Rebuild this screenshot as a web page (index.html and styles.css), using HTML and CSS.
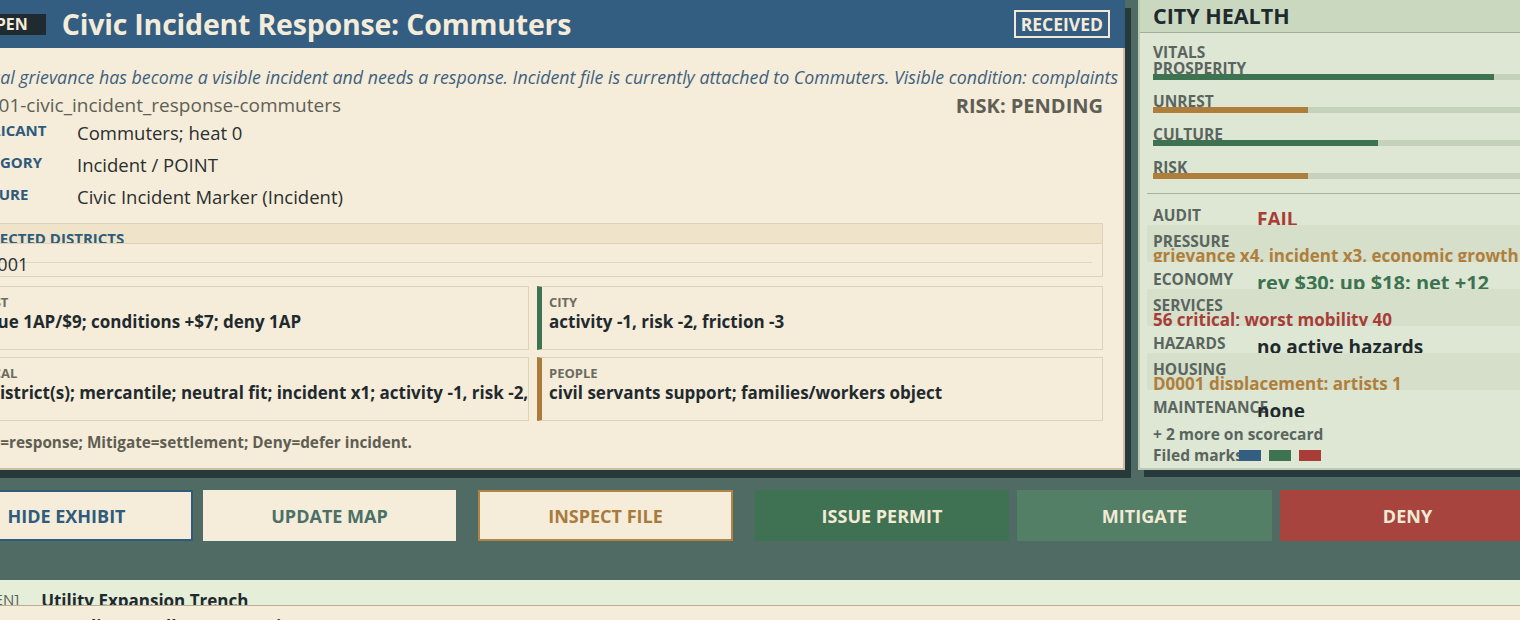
FILE: index.html
```html
<!DOCTYPE html>
<html lang="en">
<head>
  <meta charset="UTF-8">
  <meta name="viewport" content="width=device-width, initial-scale=1.0">
  <title>Civic Incident Response</title>
  <link rel="stylesheet" href="styles.css">
</head>
<body>
<div class="desk">

  <div class="upper">
    <!-- incident file -->
    <section class="dossier">
      <header class="dossier-head">
        <span class="state">OPEN</span>
        <h1>Civic Incident Response: Commuters</h1>
        <span class="stamp">RECEIVED</span>
      </header>
      <div class="dossier-body">
        <p class="summary">A local grievance has become a visible incident and needs a response. Incident file is currently attached to Commuters. Visible condition: complaints up along the transit corridor.</p>
        <div class="ref-row">
          <span class="ref">D0001-civic_incident_response-commuters</span>
          <span class="risk">RISK: PENDING</span>
        </div>
        <dl class="facts">
          <dt>APPLICANT</dt><dd>Commuters; heat 0</dd>
          <dt>CATEGORY</dt><dd>Incident / POINT</dd>
          <dt>FEATURE</dt><dd>Civic Incident Marker (Incident)</dd>
        </dl>
        <div class="districts">
          <div class="districts-head">AFFECTED DISTRICTS</div>
          <div class="districts-body">D0001</div>
        </div>
        <div class="effects">
          <div class="effect tone-blue">
            <span class="effect-label">COST</span>
            <span class="effect-value">Issue 1AP/$9; conditions +$7; deny 1AP</span>
          </div>
          <div class="effect tone-green">
            <span class="effect-label">CITY</span>
            <span class="effect-value">activity -1, risk -2, friction -3</span>
          </div>
          <div class="effect tone-blue">
            <span class="effect-label">LOCAL</span>
            <span class="effect-value">1 district(s); mercantile; neutral fit; incident x1; activity -1, risk -2, friction -3</span>
          </div>
          <div class="effect tone-gold">
            <span class="effect-label">PEOPLE</span>
            <span class="effect-value">civil servants support; families/workers object</span>
          </div>
        </div>
        <p class="note">Issue=response; Mitigate=settlement; Deny=defer incident.</p>
      </div>
    </section>

    <!-- city health sidebar -->
    <aside class="health">
      <h2>CITY HEALTH</h2>
      <div class="health-body">
        <div class="section-title">VITALS</div>
        <div class="meter">
          <div class="meter-label">PROSPERITY</div>
          <div class="meter-track"><div class="meter-fill good" style="width: 88%"></div></div>
        </div>
        <div class="meter">
          <div class="meter-label">UNREST</div>
          <div class="meter-track"><div class="meter-fill warn" style="width: 40%"></div></div>
        </div>
        <div class="meter">
          <div class="meter-label">CULTURE</div>
          <div class="meter-track"><div class="meter-fill good" style="width: 58%"></div></div>
        </div>
        <div class="meter">
          <div class="meter-label">RISK</div>
          <div class="meter-track"><div class="meter-fill warn" style="width: 40%"></div></div>
        </div>

        <div class="scorecard">
          <div class="score">
            <span class="score-label">AUDIT</span>
            <span class="score-value bad">FAIL</span>
          </div>
          <div class="score stacked">
            <span class="score-label">PRESSURE</span>
            <span class="score-value warn">grievance x4, incident x3, economic growth x2</span>
          </div>
          <div class="score">
            <span class="score-label">ECONOMY</span>
            <span class="score-value good wide">rev $30: up $18: net +12</span>
          </div>
          <div class="score stacked">
            <span class="score-label">SERVICES</span>
            <span class="score-value bad">56 critical; worst mobility 40</span>
          </div>
          <div class="score">
            <span class="score-label">HAZARDS</span>
            <span class="score-value">no active hazards</span>
          </div>
          <div class="score stacked">
            <span class="score-label">HOUSING</span>
            <span class="score-value warn">D0001 displacement: artists 1</span>
          </div>
          <div class="score">
            <span class="score-label">MAINTENANCE</span>
            <span class="score-value">none</span>
          </div>
        </div>

        <div class="more">+ 2 more on scorecard</div>
        <div class="marks">
          <span class="marks-label">Filed marks</span>
          <span class="mark blue"></span>
          <span class="mark green"></span>
          <span class="mark red"></span>
        </div>
      </div>
    </aside>
  </div>

  <div class="actions">
    <div class="action-group">
      <button class="btn btn-hide">HIDE EXHIBIT</button>
      <button class="btn btn-map">UPDATE MAP</button>
    </div>
    <button class="btn btn-inspect">INSPECT FILE</button>
    <div class="action-group">
      <button class="btn btn-issue">ISSUE PERMIT</button>
      <button class="btn btn-mitigate">MITIGATE</button>
      <button class="btn btn-deny">DENY</button>
    </div>
  </div>

  <ul class="docket">
    <li class="docket-row current">
      <span class="docket-state">[OPEN]</span>
      <span class="docket-title">Utility Expansion Trench</span>
    </li>
    <li class="docket-row">
      <span class="docket-state">[HOLD]</span>
      <span class="docket-title">Compliance Follow-Up Hearing</span>
      <span class="docket-turn">T20</span>
    </li>
  </ul>

</div>
</body>
</html>
```

FILE: styles.css
```css
html, body {
  margin: 0;
  height: 100%;
}

body {
  background: #4f6b64;
  font-family: "Open Sans", "Noto Sans", sans-serif;
  color: #1f2a2e;
  overflow: hidden;
}

.desk {
  margin-left: -58px;
  width: 1640px;
}

.upper {
  display: flex;
  align-items: flex-start;
}

/* ---------- incident file ---------- */

.dossier {
  width: 1183px;
  height: 470px;
  flex: none;
  display: flex;
  flex-direction: column;
  box-shadow: 6px 8px 0 #263a3b;
}

.dossier-head {
  height: 48px;
  flex: none;
  background: #335e82;
  display: flex;
  align-items: center;
  padding: 0 15px 0 31px;
  color: #f4ecd9;
}

.state {
  background: #1f2b31;
  font-size: 16px;
  font-weight: 700;
  line-height: 21px;
  padding: 0 18px 0 10px;
}

.dossier-head h1 {
  margin: 0 0 0 16px;
  font-size: 28.5px;
  font-weight: 700;
  letter-spacing: -0.2px;
}

.stamp {
  margin-left: auto;
  border: 2px solid #f1e8d5;
  font-size: 17.5px;
  font-weight: 700;
  line-height: 24px;
  padding: 0 5px;
}

.dossier-body {
  flex: 1;
  background: #f5ecda;
  border: 2px solid #cbbfa3;
  border-top: 0;
  padding: 18px 20px 0 19px;
  overflow: hidden;
}

.summary {
  margin: 0;
  font-size: 17.8px;
  font-style: italic;
  line-height: 22px;
  color: #3e617e;
  white-space: nowrap;
}

.ref-row {
  margin-top: 6px;
  display: flex;
  justify-content: space-between;
  align-items: center;
  height: 22px;
}

.ref {
  font-size: 19px;
  color: #5f5f55;
}

.risk {
  font-size: 20px;
  font-weight: 700;
  color: #5e5e55;
}

.facts {
  margin: 1px 0 0;
  display: grid;
  grid-template-columns: 114px 1fr;
  grid-auto-rows: 32px;
}

.facts dt {
  font-size: 15px;
  font-weight: 700;
  color: #2e5a7c;
  line-height: 18px;
  padding-top: 4px;
}

.facts dd {
  margin: 0;
  font-size: 18.5px;
  line-height: 32px;
  color: #2a2f30;
}

.districts {
  margin-top: 10px;
  border: 1px solid #ddd3bb;
}

.districts-head {
  height: 20px;
  overflow: hidden;
  background: #efe4ca;
  border-bottom: 1px solid #ddd3bb;
  padding: 4px 9px 0;
  box-sizing: border-box;
  font-size: 15px;
  font-weight: 700;
  line-height: 20px;
  color: #2e5a7c;
}

.districts-body {
  height: 32px;
  box-sizing: border-box;
  padding: 10px 10px 0;
  font-size: 18px;
  line-height: 20px;
  color: #2a2f30;
  background: linear-gradient(#e0d6bd, #e0d6bd) no-repeat;
  background-origin: content-box;
  background-clip: content-box;
  background-size: 100% 1px;
  background-position: 0 8px;
}

.effects {
  margin-top: 9px;
  display: grid;
  grid-template-columns: 1fr 1fr;
  grid-auto-rows: 64px;
  gap: 7px 8px;
}

.effect {
  border: 1px solid #ddd3bb;
  border-left: 5px solid #335e82;
  padding: 7px 8px 0 7px;
  display: flex;
  flex-direction: column;
  overflow: hidden;
  white-space: nowrap;
}

.tone-green { border-left-color: #3d7352; }
.tone-gold { border-left-color: #a97c3c; }

.effect-label {
  font-size: 13px;
  font-weight: 700;
  line-height: 17px;
  color: #6b6b5e;
}

.effect-value {
  font-size: 17px;
  font-weight: 700;
  line-height: 21px;
  color: #1f2a2e;
}

.note {
  margin: 11px 0 0 -2px;
  font-size: 15.3px;
  font-weight: 700;
  line-height: 20px;
  color: #5e5e52;
}

/* ---------- city health ---------- */

.health {
  margin: -2px 0 0 13px;
  width: 418px;
  height: 472px;
  flex: none;
  box-sizing: border-box;
  background: #dde7d3;
  border: 2px solid #bccab3;
  box-shadow: 6px 7px 0 #263a3b;
}

.health h2 {
  margin: 0;
  height: 32px;
  background: #cbd8c0;
  border-bottom: 1px solid #9fae98;
  padding-left: 13px;
  font-size: 21.5px;
  font-weight: 700;
  line-height: 31px;
  color: #1f2a2e;
}

.health-body {
  padding: 10px 13px 0;
}

.section-title,
.meter-label,
.score-label,
.more,
.marks-label {
  font-size: 15.5px;
  font-weight: 700;
  color: #5a655f;
}

.section-title {
  line-height: 18px;
}

.meter {
  margin-top: 1px;
}

.meter + .meter {
  margin-top: 15px;
}

.meter-label {
  height: 12px;
  line-height: 13px;
  overflow: hidden;
}

.meter-track {
  height: 6px;
  background: #c6d1bc;
}

.meter-fill {
  height: 100%;
}

.meter-fill.good { background: #3e7352; }
.meter-fill.warn { background: #b07e3b; }

.scorecard {
  margin: 14px -6px 0;
  padding-top: 4px;
  border-top: 1px solid #a5b49d;
}

.score {
  height: 27px;
  padding: 8px 6px 0;
  box-sizing: border-box;
  display: flex;
  align-items: flex-start;
  overflow: hidden;
  white-space: nowrap;
}

.score-label {
  width: 104px;
  flex: none;
  line-height: 18px;
}

.score-value {
  margin-top: 1px;
  font-size: 19px;
  font-weight: 700;
  line-height: 24px;
  color: #1f2a2e;
}

.score-value.wide {
  font-size: 20px;
}

.score.stacked {
  height: 37px;
  padding-top: 7px;
  flex-direction: column;
  background: #d5dfca;
}

.score.stacked .score-value {
  margin-top: 0;
  font-size: 17px;
  line-height: 12px;
}

.score-value.good { color: #3e7352; }
.score-value.warn { color: #b07e3b; }
.score-value.bad { color: #a83c37; }

.more {
  margin-top: 8px;
  line-height: 18px;
}

.marks {
  margin-top: 3px;
  display: flex;
  align-items: center;
  gap: 8px;
  line-height: 18px;
}

.marks-label {
  width: 78px;
  flex: none;
  white-space: nowrap;
}

.mark {
  width: 22px;
  height: 11px;
}

.mark.blue { background: #335e82; }
.mark.green { background: #3e7352; }
.mark.red { background: #a83c37; }

/* ---------- action bar ---------- */

.actions {
  display: flex;
  gap: 22px;
  margin-left: -2px;
  padding: 20px 0 39px;
}

.action-group {
  display: flex;
  gap: 8px;
}

.action-group:first-child {
  gap: 10px;
}

.btn {
  width: 255px;
  height: 51px;
  border: 2px solid transparent;
  font-family: inherit;
  font-size: 18px;
  font-weight: 700;
  color: #f3ead6;
  cursor: pointer;
}

.btn-hide {
  width: 253px;
  background: #f5ecd9;
  border-color: #2f5b7d;
  color: #2f5b7d;
}

.btn-map {
  width: 253px;
  background: #f5ecd9;
  border-color: #f5ecd9;
  color: #4a7068;
}

.btn-inspect {
  background: #f5ecd9;
  border-color: #b08445;
  color: #a87b3c;
}

.btn-issue {
  width: 254px;
  background: #3e7252;
}

.btn-mitigate {
  background: #527f66;
}

.btn-deny {
  background: #a8443e;
}

/* ---------- docket list ---------- */

.docket {
  list-style: none;
  margin: 0;
  padding: 0;
}

.docket-row {
  display: flex;
  align-items: flex-start;
  padding: 10px 0 0 27px;
  height: 26px;
  box-sizing: border-box;
  overflow: hidden;
  background: #f5ecda;
  border-bottom: 1px solid #b8ae96;
}

.docket-row.current {
  background: #e5eed9;
}

.docket-state {
  margin-right: 22px;
  flex: none;
  font-size: 15px;
  line-height: 18px;
  color: #5f5f55;
}

.docket-title {
  font-size: 17px;
  font-weight: 700;
  line-height: 22px;
}

.docket-turn {
  margin-left: auto;
  margin-right: 64px;
  font-size: 14px;
  line-height: 22px;
  color: #5f5f55;
}
```
